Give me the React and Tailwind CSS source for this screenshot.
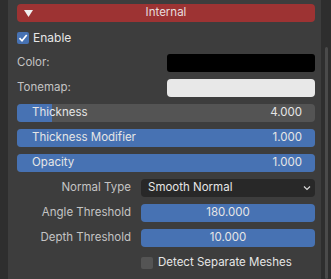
const Slider = ({ label, value, fill }) => (
  <div className="relative h-[18px] rounded-[4px] bg-[#545454] overflow-hidden">
    <div className="absolute inset-y-0 left-0 bg-[#4772b3]" style={{ width: fill }} />
    <div className="relative flex h-full items-center justify-between pl-[15px] pr-[13px] text-[#e6e6e6]">
      <span>{label}</span>
      <span>{value}</span>
    </div>
  </div>
);

const NumField = ({ value }) => (
  <div className="flex h-[18px] items-center justify-center rounded-[4px] bg-[#4772b3] text-[#e6e6e6]">
    {value}
  </div>
);

const PropRow = ({ label, children }) => (
  <div className="flex items-center">
    <div className="w-[113px] pr-[10px] text-right text-[#c4c4c4]">{label}</div>
    <div className="flex-1">{children}</div>
  </div>
);

export default function App() {
  return (
    <div
      className="flex h-[279px] w-[331px] bg-[#2e2e2e] text-[11.5px] leading-none"
      style={{ fontFamily: "Inter, 'DejaVu Sans', sans-serif" }}
    >
      <div className="ml-[8px] w-[313px] bg-[#3d3d3d] pl-[9px] pr-[6px] pt-[4px]">
        {/* Header */}
        <div className="relative flex h-[18px] items-center justify-center rounded-[4px] bg-[#9d3333] text-[#e8dede]">
          <svg className="absolute left-[7px] top-[6px]" width="9" height="7" viewBox="0 0 9 7">
            <path d="M0 0 H9 L4.5 7 Z" fill="#f0f0f0" />
          </svg>
          Internal
        </div>

        {/* Enable */}
        <div className="mt-[10px] flex items-center gap-[4px]">
          <div className="flex h-[12px] w-[12px] items-center justify-center rounded-[2px] bg-[#4772b3]">
            <svg width="10" height="10" viewBox="0 0 10 10">
              <path d="M1.5 5.2 L4 7.8 L8.7 2" fill="none" stroke="#fff" strokeWidth="1.7" />
            </svg>
          </div>
          <span className="text-[12px] text-[#e6e6e6]">Enable</span>
        </div>

        {/* Color */}
        <div className="mt-[10px] flex items-center">
          <div className="w-[150px] text-[#c4c4c4]">Color:</div>
          <div className="h-[18px] flex-1 rounded-[3px] bg-[#000000]" />
        </div>
        <div className="mt-[7px] flex items-center">
          <div className="w-[150px] text-[#c4c4c4]">Tonemap:</div>
          <div className="h-[18px] flex-1 rounded-[4px] bg-[#e8e8e8]" />
        </div>

        <div className="mt-[7px] flex flex-col gap-[7px]">
          <Slider label="Thickness" value="4.000" fill="35px" />
          <Slider label="Thickness Modifier" value="1.000" fill="100%" />
          <Slider label="Opacity" value="1.000" fill="100%" />
        </div>

        <div className="ml-[11px] mt-[7px] flex flex-col gap-[7px]">
          <PropRow label="Normal Type">
            <div className="flex h-[18px] items-center justify-between rounded-[4px] bg-[#282828] pl-[7px] pr-[4px] text-[#e6e6e6]">
              <span>Smooth Normal</span>
              <svg width="8" height="6" viewBox="0 0 8 6">
                <path d="M1 1.5 L4 4.5 L7 1.5" fill="none" stroke="#d8d8d8" strokeWidth="1.2" />
              </svg>
            </div>
          </PropRow>
          <PropRow label="Angle Threshold">
            <NumField value="180.000" />
          </PropRow>
          <PropRow label="Depth Threshold">
            <NumField value="10.000" />
          </PropRow>
          <PropRow label="">
            <div className="mt-[3px] flex items-center gap-[5px]">
              <div className="h-[12px] w-[12px] rounded-[2px] bg-[#545454]" />
              <span className="text-[#e6e6e6]">Detect Separate Meshes</span>
            </div>
          </PropRow>
        </div>
      </div>
      <div className="flex-1 pl-[4px] pt-[47px]">
        <div className="h-full w-[3px] rounded-full bg-[#4a4a4a]" />
      </div>
    </div>
  );
}
